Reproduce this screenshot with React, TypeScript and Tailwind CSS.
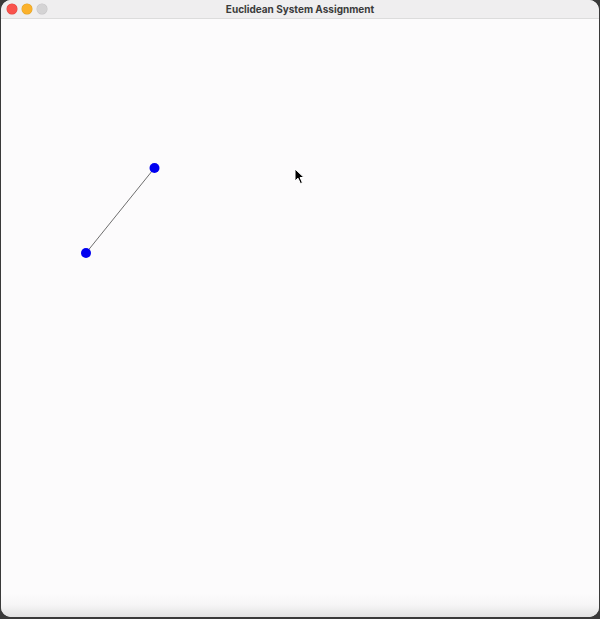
import React from "react";

const Dot = ({ x, y }: { x: number; y: number }) => (
  <circle cx={x} cy={y} r={5} fill="#0000f0" />
);

const Cursor = () => (
  <svg
    width="14"
    height="18"
    viewBox="0 0 14 18"
    className="absolute left-[293px] top-[149px]"
  >
    <path
      d="M1 1 L1 13 L4 10.2 L6.4 15.6 L8.4 14.7 L6.1 9.5 L10 9.5 Z"
      fill="#000"
      stroke="#fff"
      strokeWidth="1"
      strokeLinejoin="round"
    />
  </svg>
);

const TitleBar = () => (
  <div className="relative flex h-[19px] items-center border-b border-[#dcdcdc] bg-[#efeeef]">
    <div className="flex items-center gap-[5px] pl-[6px]">
      <span className="h-[10px] w-[10px] rounded-full bg-[#f9524c] ring-[0.5px] ring-[#e0443e]" />
      <span className="h-[10px] w-[10px] rounded-full bg-[#fbb12b] ring-[0.5px] ring-[#dea123]" />
      <span className="h-[10px] w-[10px] rounded-full bg-[#d4d3d4] ring-[0.5px] ring-[#c4c3c4]" />
    </div>
    <div className="absolute inset-0 flex items-center justify-center font-['Inter',sans-serif] text-[10px] font-bold text-[#3b3b3b]">
      Euclidean System Assignment
    </div>
  </div>
);

export default function App() {
  return (
    <div className="flex h-[619px] w-[600px] bg-[#3a3a3a] pb-[2px] pl-[1px] pr-[1px]">
      <div className="flex flex-1 flex-col overflow-hidden rounded-[10px] bg-[#fcfbfc]">
        <TitleBar />
        <div className="relative flex-1">
          <svg width="598" height="580" className="absolute left-[-1px] top-[-19px]">
            <line x1={154.5} y1={168} x2={86} y2={253} stroke="#6e6e6e" strokeWidth="1" />
            <Dot x={154.5} y={168} />
            <Dot x={86} y={253} />
          </svg>
          <Cursor />
        </div>
        <div className="h-[24px] bg-gradient-to-b from-[#fcfbfc] via-[#f6f5f6] to-[#e2e2e2]" />
      </div>
    </div>
  );
}
